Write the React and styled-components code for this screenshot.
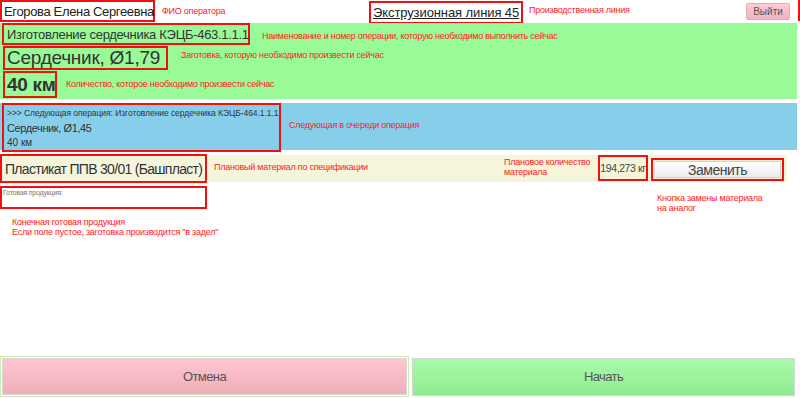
import styled, { createGlobalStyle } from 'styled-components';

const GlobalStyle = createGlobalStyle`
  html, body {
    margin: 0;
    padding: 0;
    background: #fff;
  }
  body {
    font-family: "Liberation Sans", Arial, sans-serif;
    color: #333;
  }
`

const Page = styled.div`
  width: 800px;
  height: 398px;
  display: flex;
  flex-direction: column;
  overflow: hidden;
`

const Header = styled.div`
  height: 23px;
  display: flex;
  align-items: flex-start;
`

const Framed = styled.div`
  border: 2px solid #f01010;
  box-sizing: border-box;
  display: flex;
  align-items: center;
  white-space: nowrap;
  flex-shrink: 0;
`

const OperatorName = styled(Framed)`
  height: 22px;
  width: 155px;
  padding-left: 2px;
  font-size: 13px;
  letter-spacing: -0.35px;
  color: #222;
`

const LineName = styled(Framed)`
  margin-top: 1px;
  height: 23px;
  width: 154px;
  padding-left: 2px;
  font-size: 13px;
  letter-spacing: -0.1px;
  color: #222;
  text-decoration: underline;
`

const Note = styled.div`
  color: #ff1a1a;
  font-size: 9px;
  line-height: 10px;
  letter-spacing: -0.25px;
  white-space: nowrap;
  flex-shrink: 0;
  margin-left: ${(p) => p.$left || 0}px;
  margin-top: ${(p) => p.$top || 0}px;
  width: ${(p) => (p.$width ? p.$width + 'px' : 'auto')};
`

const ExitButton = styled.button`
  margin-left: auto;
  margin-top: 3px;
  width: 44px;
  height: 17px;
  padding: 0;
  border: 1px solid #d4b4b9;
  border-radius: 2px;
  background: linear-gradient(#ffcbd3, #f1b3bd);
  color: #555;
  font-family: "Liberation Sans", Arial, sans-serif;
  font-size: 10px;
`

const EdgeMark = styled.div`
  margin-left: 8px;
  width: 2px;
  height: 21px;
  background: #f01010;
`

const Band = styled.div`
  width: ${(p) => p.$width || 797}px;
  height: ${(p) => p.$height}px;
  background: ${(p) => p.$bg};
  margin-top: ${(p) => p.$gap || 0}px;
  display: flex;
  flex-shrink: 0;
  flex-direction: ${(p) => (p.$row ? 'row' : 'column')};
  align-items: ${(p) => (p.$row ? 'center' : 'stretch')};
`

const Row = styled.div`
  display: flex;
  align-items: center;
`

const OperationTitle = styled(Framed)`
  margin-left: 2px;
  height: 22px;
  width: 248px;
  padding-left: 3px;
  font-size: 13px;
  letter-spacing: -0.3px;
  color: #333;
`

const Blank = styled(Framed)`
  margin: 1px 0 0 3px;
  height: 24px;
  width: 165px;
  padding-left: 2px;
  font-size: 19px;
  letter-spacing: -0.25px;
  color: #333;
`

const Amount = styled(Framed)`
  margin: 1px 0 0 3px;
  height: 27px;
  width: 54px;
  padding-left: 2px;
  font-size: 19px;
  font-weight: bold;
  letter-spacing: -0.3px;
  color: #333;
`

const NextBox = styled.div`
  margin-left: 2px;
  align-self: flex-start;
  width: 279px;
  height: 49px;
  flex-shrink: 0;
  box-sizing: border-box;
  border: 2px solid #f01010;
  padding: 1px 0 0 3px;
  display: flex;
  flex-direction: column;
  overflow: hidden;
  color: #333;
`

const NextLine = styled.div`
  font-size: ${(p) => p.$size}px;
  line-height: ${(p) => p.$lh}px;
  letter-spacing: ${(p) => p.$ls || 0}px;
  white-space: nowrap;
`

const Material = styled(Framed)`
  height: 29px;
  width: 207px;
  padding-left: 3px;
  font-size: 14px;
  letter-spacing: -0.7px;
  color: #333;
`

const Weight = styled(Framed)`
  height: 26px;
  width: 50px;
  margin-top: -1px;
  justify-content: center;
  font-size: 10.5px;
  letter-spacing: -0.4px;
  color: #444;
`

const ReplaceFrame = styled(Framed)`
  margin: 2px 0 0 3px;
  width: 133px;
  height: 23px;
  padding: 1px;
`

const ReplaceButton = styled.button`
  width: 100%;
  height: 100%;
  padding: 0;
  border: 1px solid #d2d2d2;
  border-radius: 1px;
  background: linear-gradient(#ffffff, #ebebeb);
  color: #444;
  font-family: "Liberation Sans", Arial, sans-serif;
  font-size: 14px;
  letter-spacing: -0.5px;
`

const Lower = styled.div`
  display: flex;
  flex: 1;
`

const LeftCol = styled.div`
  width: 208px;
  display: flex;
  flex-direction: column;
`

const ProductBox = styled.div`
  margin-top: 4px;
  width: 207px;
  height: 23px;
  box-sizing: border-box;
  border: 2px solid #f01010;
  padding: 1px 1px 0;
  font-size: 7px;
  line-height: 8px;
  letter-spacing: -0.2px;
  color: #777;
`

const Footer = styled.div`
  height: 41px;
  display: flex;
  align-items: center;
  margin-bottom: 1px;
`

const CancelWrap = styled.div`
  width: 409px;
  height: 41px;
  box-sizing: border-box;
  border: 1px solid #cfeab4;
  padding: 1px;
`

const BigButton = styled.button`
  width: ${(p) => p.$width || '100%'};
  height: ${(p) => p.$height || '100%'};
  margin-left: ${(p) => p.$left || 0}px;
  padding: 0;
  border: 1px solid ${(p) => p.$border};
  background: linear-gradient(${(p) => p.$from}, ${(p) => p.$to});
  color: #555;
  font-family: "Liberation Sans", Arial, sans-serif;
  font-size: 13px;
  letter-spacing: -0.6px;
`

export default function App() {
  return (
    <Page>
      <GlobalStyle />
      <Header>
        <OperatorName>Егорова Елена Сергеевна</OperatorName>
        <Note $left={7} $top={6} $width={207}>ФИО оператора</Note>
        <LineName>Экструзионная линия 45</LineName>
        <Note $left={6} $top={5}>Производственная линия</Note>
        <ExitButton>Выйти</ExitButton>
        <EdgeMark />
      </Header>

      <Band $bg="#98fb98" $height={76}>
        <Row>
          <OperationTitle>Изготовление сердечника КЭЦБ-463.1.1.1</OperationTitle>
          <Note $left={12} $top={3}>Наименование и номер операции, которую необходимо выполнить сейчас</Note>
        </Row>
        <Row>
          <Blank>Сердечник, Ø1,79</Blank>
          <Note $left={13} $top={-5}>Заготовка, которую необходимо произвести сейчас</Note>
        </Row>
        <Row>
          <Amount>40 км</Amount>
          <Note $left={9}>Количество, которое необходимо произвести сейчас</Note>
        </Row>
      </Band>

      <Band $bg="#87ceeb" $height={47} $gap={4} $row>
        <NextBox>
          <NextLine $size={8.5} $lh={14} $ls={-0.06}>&gt;&gt;&gt; Следующая операция: Изготовление сердечника КЭЦБ-464.1.1.1</NextLine>
          <NextLine $size={11} $lh={16} $ls={-0.4}>Сердечник, Ø1,45</NextLine>
          <NextLine $size={10} $lh={14}>40 км</NextLine>
        </NextBox>
        <Note $left={8} $top={-3}>Следующая в очереди операция</Note>
      </Band>

      <Band $bg="#f5f5dc" $height={27} $gap={5} $width={787} $row>
        <Material>Пластикат ППВ 30/01 (Башпласт)</Material>
        <Note $left={7} $width={290} $top={-3}>Плановый материал по спецификации</Note>
        <Note $width={94} $top={-3}>
          Плановое количество
          <br />
          материала
        </Note>
        <Weight>194,273 кг</Weight>
        <ReplaceFrame>
          <ReplaceButton>Заменить</ReplaceButton>
        </ReplaceFrame>
      </Band>

      <Lower>
        <LeftCol>
          <ProductBox>Готовая продукция:</ProductBox>
          <Note $left={12} $top={8}>
            Конечная готовая продукция
            <br />
            Если поле пустое, заготовка производится "в задел"
          </Note>
        </LeftCol>
        <Note $left={449} $top={11}>
          Кнопка замены материала
          <br />
          на аналог
        </Note>
      </Lower>

      <Footer>
        <CancelWrap>
          <BigButton $border="#d8d8d8" $from="#ffc5cf" $to="#efafba">Отмена</BigButton>
        </CancelWrap>
        <BigButton $width="383px" $height="38px" $left={3} $border="#d6d6d6" $from="#aafaaa" $to="#8fec8f">Начать</BigButton>
      </Footer>
    </Page>
  );
}
